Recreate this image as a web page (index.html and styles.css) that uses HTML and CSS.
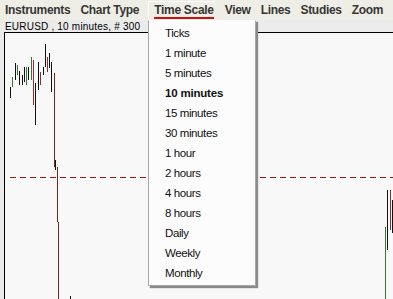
FILE: index.html
```html
<!DOCTYPE html>
<html lang="en">
<head>
    <meta charset="UTF-8">
    <meta name="viewport" content="width=device-width, initial-scale=1.0">
    <title>Chart — Time Scale menu</title>
    <link rel="stylesheet" href="styles.css">
</head>
<body>

  <div class="menu-bar">
    <span class="menu-item">Instruments</span>
    <span class="menu-item">Chart Type</span>
    <span class="menu-item active"><span class="menu-label">Time Scale</span></span>
    <span class="menu-item">View</span>
    <span class="menu-item">Lines</span>
    <span class="menu-item">Studies</span>
    <span class="menu-item">Zoom</span>
  </div>

  <div class="chart-panel">
    <div class="chart-title">EURUSD , 10 minutes, # 300</div>
    <div class="chart-area">
      <svg class="chart-lines" xmlns="http://www.w3.org/2000/svg" width="388" height="266">
        <g transform="translate(-5,-33)" stroke-width="1" fill="none">
          <!-- price line -->
          <path stroke="#a01414" stroke-dasharray="6 4" d="M10 177.5H393"/>
          <!-- bars -->
          <path stroke="#111" d="M10.5 87V98M15.5 63V80M19.5 71V85M22.5 75V85M24.5 67V82M28.5 67V80M35.5 83V125M38.5 62V90M43.5 67V75M45.5 44V67M49.5 53V68M51.5 62V92M55.5 160V170M70.5 296V299M387.5 190V250M392.5 200V233"/>
          <path stroke="#2f7a2f" d="M12.5 77V87M17.5 65V75M26.5 67V85M31.5 57V80M385.5 227V299"/>
          <path stroke="#9a2a2a" d="M33.5 60V105M40.5 72V85M47.5 57V72M390.5 190V230"/>
          <path stroke="#7e2418" d="M54.5 73V167M57.5 167V222M58.5 222V299"/>
        </g>
      </svg>
    </div>
  </div>

  <!-- Time Scale dropdown -->
  <ul class="dropdown">
    <li>Ticks</li>
    <li>1 minute</li>
    <li>5 minutes</li>
    <li class="selected">10 minutes</li>
    <li>15 minutes</li>
    <li>30 minutes</li>
    <li>1 hour</li>
    <li>2 hours</li>
    <li>4 hours</li>
    <li>8 hours</li>
    <li>Daily</li>
    <li>Weekly</li>
    <li>Monthly</li>
  </ul>

</body>
</html>
```

FILE: styles.css
```css
body {
  margin: 0;
  width: 393px;
  height: 299px;
  overflow: hidden;
  background-color: #ebebeb;
  font-family: "Liberation Sans", Arial, sans-serif;
  display: flex;
  flex-direction: column;
}

.menu-bar {
  height: 20px;
  display: flex;
  gap: 10px;
  padding-left: 5px;
  background-color: #efeee6;
  font-size: 12px;
  font-weight: bold;
  letter-spacing: -0.3px;
  line-height: 20px;
  color: #363636;
  white-space: nowrap;
}

.menu-item.active {
  margin-left: -1px;
  margin-top: 1px;
  height: 19px;
  padding: 0 1px 0 5px;
  border-left: 1px solid #ffffff;
  border-top: 1px solid #ffffff;
  box-sizing: border-box;
}

.menu-label {
  display: block;
  margin-top: 1px;
  line-height: 14px;
  border-bottom: 2px solid #cc1010;
}

.chart-panel {
  flex: 1;
  display: flex;
  flex-direction: column;
}

.chart-title {
  height: 12px;
  padding-left: 5px;
  font-size: 10px;
  letter-spacing: 0.2px;
  line-height: 14px;
  color: #000;
  white-space: nowrap;
}

.chart-area {
  flex: 1;
  position: relative;
  margin-left: 4px;
  border-top: 1px solid #000;
  border-left: 1px solid #000;
  background-color: #f8f8f8;
  overflow: hidden;
}

.chart-lines {
  display: block;
}

.dropdown {
  position: absolute;
  left: 148px;
  top: 20px;
  width: 106px;
  margin: 0;
  padding: 2px 0 2px 0;
  list-style: none;
  background-color: #fcfcfc;
  border: 1px solid #a8a8a8;
  border-top-color: #ffffff;
  box-shadow: 2px 2px 1px #8a8a8a;
  font-size: 11.5px;
  letter-spacing: -0.4px;
  color: #111;
}

.dropdown li {
  height: 20px;
  line-height: 20px;
  padding-left: 16px;
  white-space: nowrap;
}

.dropdown li.selected {
  font-weight: bold;
  letter-spacing: -0.2px;
}
```
